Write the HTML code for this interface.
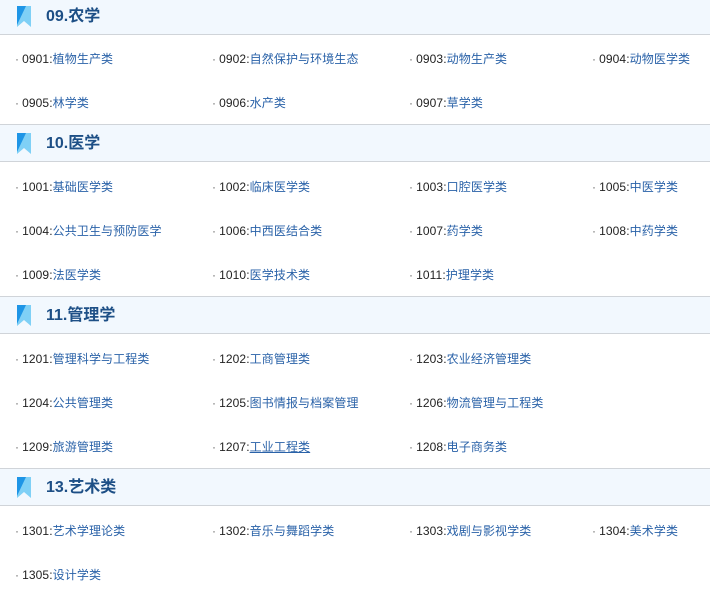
<!DOCTYPE html><html><head><meta charset="utf-8"><style>
body{margin:0;width:710px;height:593px;overflow:hidden;background:#fff;font-family:"Liberation Sans","Noto Sans CJK SC",sans-serif;position:relative}
.h{position:absolute;left:0;width:710px;height:38px;background:#f2f8fe;border-top:1px solid #d0d4d9;border-bottom:1px solid #d0d4d9;box-sizing:border-box}
.h svg{position:absolute;left:17px;top:8px}
.h b{position:absolute;left:46px;top:9px;font-size:16px;color:#1d4f86;line-height:20px}
.i{position:absolute;font-size:12px;line-height:16px;color:#222;white-space:nowrap;margin-top:1px;letter-spacing:0.1px}
.i span{color:#2a62a8}
.i:before{content:"·";color:#666;margin-right:3px}
</style></head><body>
<div class="h" style="top:-3px"><svg width="14" height="21" viewBox="0 0 14 21"><path d="M0 0H14V21L7 15L0 21Z" fill="#7fd0f6"/><path d="M0 0L9 0L0 19Z" fill="#1e95e6"/></svg><b>09.农学</b></div>
<div class="i" style="left:15px;top:50px">0901:<span>植物生产类</span></div>
<div class="i" style="left:212px;top:50px">0902:<span>自然保护与环境生态</span></div>
<div class="i" style="left:409px;top:50px">0903:<span>动物生产类</span></div>
<div class="i" style="left:592px;top:50px">0904:<span>动物医学类</span></div>
<div class="i" style="left:15px;top:94px">0905:<span>林学类</span></div>
<div class="i" style="left:212px;top:94px">0906:<span>水产类</span></div>
<div class="i" style="left:409px;top:94px">0907:<span>草学类</span></div>

<div class="h" style="top:124px"><svg width="14" height="21" viewBox="0 0 14 21"><path d="M0 0H14V21L7 15L0 21Z" fill="#7fd0f6"/><path d="M0 0L9 0L0 19Z" fill="#1e95e6"/></svg><b>10.医学</b></div>
<div class="i" style="left:15px;top:178px">1001:<span>基础医学类</span></div>
<div class="i" style="left:212px;top:178px">1002:<span>临床医学类</span></div>
<div class="i" style="left:409px;top:178px">1003:<span>口腔医学类</span></div>
<div class="i" style="left:592px;top:178px">1005:<span>中医学类</span></div>
<div class="i" style="left:15px;top:222px">1004:<span>公共卫生与预防医学</span></div>
<div class="i" style="left:212px;top:222px">1006:<span>中西医结合类</span></div>
<div class="i" style="left:409px;top:222px">1007:<span>药学类</span></div>
<div class="i" style="left:592px;top:222px">1008:<span>中药学类</span></div>
<div class="i" style="left:15px;top:266px">1009:<span>法医学类</span></div>
<div class="i" style="left:212px;top:266px">1010:<span>医学技术类</span></div>
<div class="i" style="left:409px;top:266px">1011:<span>护理学类</span></div>

<div class="h" style="top:296px"><svg width="14" height="21" viewBox="0 0 14 21"><path d="M0 0H14V21L7 15L0 21Z" fill="#7fd0f6"/><path d="M0 0L9 0L0 19Z" fill="#1e95e6"/></svg><b>11.管理学</b></div>
<div class="i" style="left:15px;top:350px">1201:<span>管理科学与工程类</span></div>
<div class="i" style="left:212px;top:350px">1202:<span>工商管理类</span></div>
<div class="i" style="left:409px;top:350px">1203:<span>农业经济管理类</span></div>
<div class="i" style="left:15px;top:394px">1204:<span>公共管理类</span></div>
<div class="i" style="left:212px;top:394px">1205:<span>图书情报与档案管理</span></div>
<div class="i" style="left:409px;top:394px">1206:<span>物流管理与工程类</span></div>
<div class="i" style="left:15px;top:438px">1209:<span>旅游管理类</span></div>
<div class="i" style="left:212px;top:438px">1207:<span style="text-decoration:underline">工业工程类</span></div>
<div class="i" style="left:409px;top:438px">1208:<span>电子商务类</span></div>

<div class="h" style="top:468px"><svg width="14" height="21" viewBox="0 0 14 21"><path d="M0 0H14V21L7 15L0 21Z" fill="#7fd0f6"/><path d="M0 0L9 0L0 19Z" fill="#1e95e6"/></svg><b>13.艺术类</b></div>
<div class="i" style="left:15px;top:522px">1301:<span>艺术学理论类</span></div>
<div class="i" style="left:212px;top:522px">1302:<span>音乐与舞蹈学类</span></div>
<div class="i" style="left:409px;top:522px">1303:<span>戏剧与影视学类</span></div>
<div class="i" style="left:592px;top:522px">1304:<span>美术学类</span></div>
<div class="i" style="left:15px;top:566px">1305:<span>设计学类</span></div>
</body></html>
